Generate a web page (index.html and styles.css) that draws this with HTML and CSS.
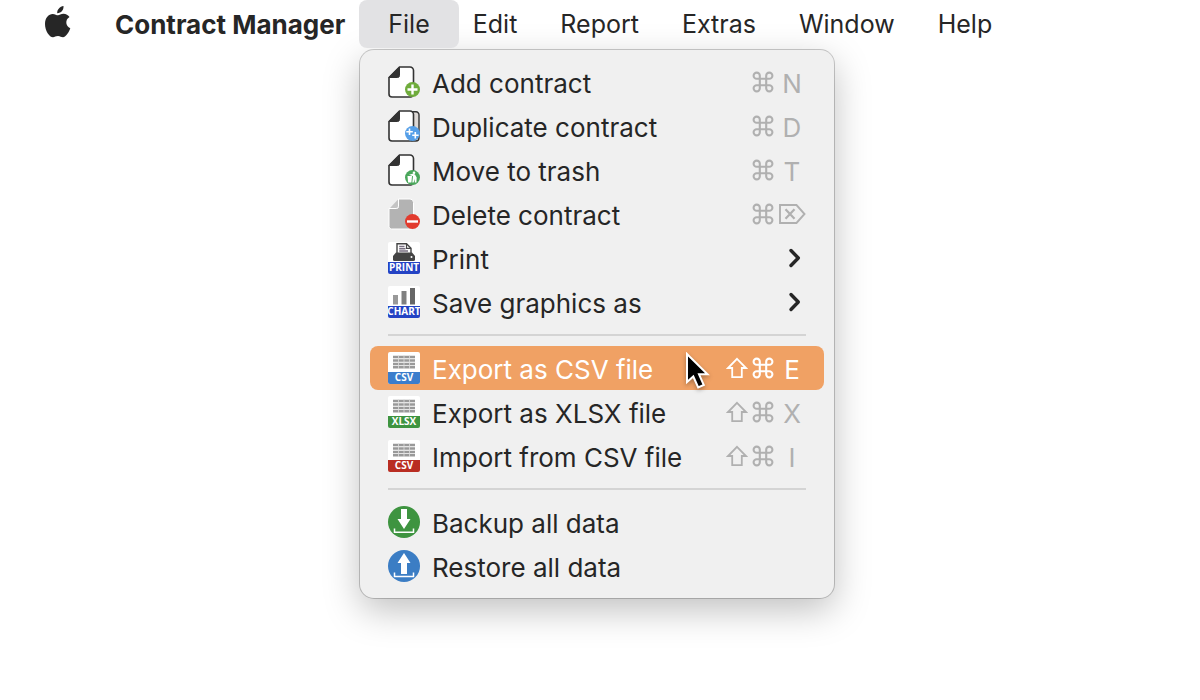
FILE: index.html
```html
<!DOCTYPE html>
<html lang="en">
<head>
    <meta charset="UTF-8">
    <meta name="viewport" content="width=device-width, initial-scale=1.0">
    <title>Contract Manager</title>
    <link rel="stylesheet" href="styles.css">
</head>
<body>
    <!-- Shared symbols -->
    <svg class="symbols" aria-hidden="true">
        <symbol id="cmd" viewBox="0 0 22 22">
            <path d="M7.8 7.8V4.8A3.1 3.1 0 1 0 4.7 7.8H17.3A3.1 3.1 0 1 0 14.2 4.8V17.2A3.1 3.1 0 1 0 17.3 14.2H4.7A3.1 3.1 0 1 0 7.8 17.2Z" fill="none" stroke="currentColor" stroke-width="2.1"/>
        </symbol>
        <symbol id="shift" viewBox="0 0 22 22">
            <path d="M11 1.8L20 11H15.8V20.2H6.2V11H2Z" fill="none" stroke="currentColor" stroke-width="1.8"/>
        </symbol>
        <symbol id="chevron" viewBox="0 0 14 22">
            <path d="M4 3.5L11.3 11L4 18.5" fill="none" stroke="currentColor" stroke-width="3.4" stroke-linecap="round" stroke-linejoin="round"/>
        </symbol>
        <symbol id="page" viewBox="0 0 32 32">
            <path d="M11.5 1H22a3.5 3.5 0 0 1 3.5 3.5V28A3 3 0 0 1 22.5 31H4A3 3 0 0 1 1 28V11.5Z" fill="#fff" stroke="#333" stroke-width="1.6"/>
            <path d="M11.5 1V9.5a2 2 0 0 1-2 2H1Z" fill="#333" stroke="#333" stroke-width="1" stroke-linejoin="round"/>
        </symbol>
        <symbol id="sheet" viewBox="0 0 32 32">
            <rect width="32" height="32" rx="2" fill="#fff"/>
            <path d="M5 5H27M5 8.5H27M5 12H27M5 15.2H27" stroke="#999" stroke-width="2.4"/>
            <path d="M10.5 3V17M16 3V17M21.5 3V17" stroke="#ddd" stroke-width="0.8"/>
        </symbol>
    </svg>

    <nav class="menubar">
        <button class="apple" aria-label="Apple">
            <svg width="28" height="34" viewBox="0 0 28 34">
                <path d="M19.5 1C19.9 4.7 17 8.3 13.2 8.2C12.9 4.6 16 1.4 19.5 1Z"/>
                <path d="M14 10.3C15.3 10.3 17 8.8 19.5 8.8C22 8.8 24.3 10.1 25.5 12C20.8 14.7 21.5 21.3 26.3 23.3C25 27 22 32.2 19 32.3C17 32.3 16.4 31 14 31C11.5 31 10.8 32.2 9 32.3C5.5 32.4 1 25.8 1 19C1 12.6 4.7 8.9 8.7 8.9C11 8.9 12.6 10.3 14 10.3Z"/>
            </svg>
        </button>
        <button class="app-name">Contract Manager</button>
        <button class="open">File</button>
        <button>Edit</button>
        <button>Report</button>
        <button>Extras</button>
        <button>Window</button>
        <button>Help</button>
    </nav>

    <div class="menu">
        <button class="item">
            <svg class="icon" viewBox="0 0 32 32">
                <use href="#page"/>
                <circle cx="24.5" cy="23.5" r="7.5" fill="#6fac3c"/>
                <path d="M24.5 18.5V28.5M19.5 23.5H29.5" stroke="#fff" stroke-width="2.4"/>
            </svg>
            <span class="label">Add contract</span>
            <span class="keys"><svg class="mod" role="img" aria-label="Command"><use href="#cmd"/></svg><span class="key">N</span></span>
        </button>
        <button class="item">
            <svg class="icon" viewBox="0 0 32 32">
                <path d="M24 1.8H28a3 3 0 0 1 3 3V28a3 3 0 0 1-3 3H24Z" fill="#ddd8d5" stroke="#333" stroke-width="1.4"/>
                <use href="#page"/>
                <circle cx="24.5" cy="23.5" r="7.5" fill="#559fe8"/>
                <path d="M21.5 18.5V25M18.3 21.7H24.8M27.3 22V28.5M24.2 25.3H30.6" stroke="#fff" stroke-width="1.6"/>
            </svg>
            <span class="label">Duplicate contract</span>
            <span class="keys"><svg class="mod" role="img" aria-label="Command"><use href="#cmd"/></svg><span class="key">D</span></span>
        </button>
        <button class="item">
            <svg class="icon" viewBox="0 0 32 32">
                <use href="#page"/>
                <circle cx="24.5" cy="23.5" r="7.5" fill="#4aa65b"/>
                <path d="M19.5 22H24L23.4 28.5H20.1Z" fill="#fff"/>
                <circle cx="26" cy="18.7" r="1.3" fill="#fff"/>
                <path d="M21 20.8L24.6 19.8L27 20.5L28.7 23.5L28.4 28.5H26.8V25L25.6 28.5H24.3L25 22.3Z" fill="#fff"/>
            </svg>
            <span class="label">Move to trash</span>
            <span class="keys"><svg class="mod" role="img" aria-label="Command"><use href="#cmd"/></svg><span class="key">T</span></span>
        </button>
        <button class="item">
            <svg class="icon" viewBox="0 0 32 32">
                <path d="M10.5 1H22a3.5 3.5 0 0 1 3.5 3.5V28.5A2.5 2.5 0 0 1 23 31H3.5A2.5 2.5 0 0 1 1 28.5V10.5H8.5a2 2 0 0 0 2-2Z" fill="#b3b3b3" stroke="#fff" stroke-width="1"/>
                <path d="M2 10L10 1.5V8a2 2 0 0 1-2 2Z" fill="#c4c4c4"/>
                <circle cx="24.5" cy="23.5" r="7.5" fill="#e23b2e"/>
                <path d="M19 23.5H30" stroke="#fff" stroke-width="2.4"/>
            </svg>
            <span class="label">Delete contract</span>
            <span class="keys">
                <svg class="mod" role="img" aria-label="Command"><use href="#cmd"/></svg>
                <svg class="delete-key" viewBox="0 0 28 22" role="img" aria-label="Forward delete">
                    <path d="M2 2H18.5L26.5 11L18.5 20H2Z" fill="none" stroke="currentColor" stroke-width="1.9"/>
                    <path d="M7.5 6.2L16.5 15.8M16.5 6.2L7.5 15.8" fill="none" stroke="currentColor" stroke-width="2.2"/>
                </svg>
            </span>
        </button>
        <button class="item">
            <svg class="icon" viewBox="0 0 32 32">
                <rect width="32" height="32" rx="2" fill="#fff"/>
                <path d="M9 12V1.8H18.5L23 6.3V12" fill="#fff" stroke="#444" stroke-width="1.4"/>
                <path d="M18.5 1.8V6.3H23" fill="none" stroke="#444" stroke-width="1.2"/>
                <path d="M11.2 4.5H16.5M11.2 6.8H17.5M11.2 9H20" stroke="#776e80" stroke-width="1.4"/>
                <path d="M8 10.5H24L27 14V17.5a1.5 1.5 0 0 1-1.5 1.5H6.5A1.5 1.5 0 0 1 5 17.5V14Z" fill="#444"/>
                <circle cx="23.5" cy="15" r="1" fill="#fff"/>
                <path d="M0 20H32V30a2 2 0 0 1-2 2H2a2 2 0 0 1-2-2Z" fill="#2443c4"/>
                <text class="tag" x="16" y="29">PRINT</text>
            </svg>
            <span class="label">Print</span>
            <svg class="chevron"><use href="#chevron"/></svg>
        </button>
        <button class="item">
            <svg class="icon" viewBox="0 0 32 32">
                <rect width="32" height="32" rx="2" fill="#fff"/>
                <path d="M5 9H10V18.5H5Z" fill="#999"/>
                <path d="M13.5 5H18.5V18.5H13.5Z" fill="#808080"/>
                <path d="M22 2H27V18.5H22Z" fill="#666"/>
                <path d="M0 20H32V30a2 2 0 0 1-2 2H2a2 2 0 0 1-2-2Z" fill="#2443c4"/>
                <text class="tag" x="16" y="29">CHART</text>
            </svg>
            <span class="label">Save graphics as</span>
            <svg class="chevron"><use href="#chevron"/></svg>
        </button>
        <hr>
        <button class="item selected">
            <svg class="icon" viewBox="0 0 32 32">
                <use href="#sheet"/>
                <path d="M0 20H32V30a2 2 0 0 1-2 2H2a2 2 0 0 1-2-2Z" fill="#3b7dcc"/>
                <text class="tag" x="16" y="29">CSV</text>
            </svg>
            <span class="label">Export as CSV file</span>
            <span class="keys"><svg class="mod" role="img" aria-label="Shift"><use href="#shift"/></svg><svg class="mod" role="img" aria-label="Command"><use href="#cmd"/></svg><span class="key">E</span></span>
            <svg class="pointer" viewBox="0 0 26 40">
                <path d="M2 2V30L8.3 24.5L13.2 35.5L18.8 33L14 22.3H22.5Z" fill="#000" stroke="#fff" stroke-width="2"/>
            </svg>
        </button>
        <button class="item">
            <svg class="icon" viewBox="0 0 32 32">
                <use href="#sheet"/>
                <path d="M0 20H32V30a2 2 0 0 1-2 2H2a2 2 0 0 1-2-2Z" fill="#3e9440"/>
                <text class="tag" x="16" y="29">XLSX</text>
            </svg>
            <span class="label">Export as XLSX file</span>
            <span class="keys"><svg class="mod" role="img" aria-label="Shift"><use href="#shift"/></svg><svg class="mod" role="img" aria-label="Command"><use href="#cmd"/></svg><span class="key">X</span></span>
        </button>
        <button class="item">
            <svg class="icon" viewBox="0 0 32 32">
                <use href="#sheet"/>
                <path d="M0 20H32V30a2 2 0 0 1-2 2H2a2 2 0 0 1-2-2Z" fill="#b92d22"/>
                <text class="tag" x="16" y="29">CSV</text>
            </svg>
            <span class="label">Import from CSV file</span>
            <span class="keys"><svg class="mod" role="img" aria-label="Shift"><use href="#shift"/></svg><svg class="mod" role="img" aria-label="Command"><use href="#cmd"/></svg><span class="key">I</span></span>
        </button>
        <hr>
        <button class="item">
            <svg class="icon" viewBox="0 0 32 32">
                <circle cx="16" cy="16" r="16" fill="#3e9440"/>
                <path d="M13 3H19V13H22.5L16 23L9.5 13H13Z" fill="#fff"/>
                <path d="M6.5 22.5V26.3H25.5V22.5" fill="none" stroke="#fff" stroke-width="1.5"/>
            </svg>
            <span class="label">Backup all data</span>
        </button>
        <button class="item">
            <svg class="icon" viewBox="0 0 32 32">
                <circle cx="16" cy="16" r="16" fill="#3b7dc4"/>
                <path d="M13 24H19V13H22.5L16 3L9.5 13H13Z" fill="#fff"/>
                <path d="M6.5 22.5V26.5H25.5V22.5" fill="none" stroke="#fff" stroke-width="1.5"/>
            </svg>
            <span class="label">Restore all data</span>
        </button>
    </div>
</body>
</html>
```
FILE: styles.css
```css
* {
    box-sizing: border-box;
    margin: 0;
    padding: 0;
}

body {
    min-height: 100vh;
    background-color: #fff;
    color: #262626;
    font-family: Inter, "Liberation Sans", sans-serif;
    font-size: 26px;
}

button {
    border: none;
    background: none;
    color: inherit;
    font: inherit;
    text-align: left;
    white-space: nowrap;
}

.symbols {
    position: absolute;
    width: 0;
    height: 0;
}

.menubar {
    display: flex;
    gap: 43px;
    height: 48px;
    padding-left: 44px;
    font-size: 25px;
}

.apple {
    display: flex;
    align-items: center;
    fill: #262626;
}

.apple svg {
    margin-bottom: 4px;
}

.menubar .app-name {
    font-size: 26px;
    font-weight: 700;
}

.menubar .open {
    margin: 0 -29px;
    padding: 0 29px;
    border-radius: 8px;
    background-color: #e2e2e4;
}

.menu {
    width: 474px;
    margin: 2px 0 0 360px;
    padding: 10px;
    border-radius: 14px;
    background-color: #f0f0f0;
    box-shadow: 0 0 0 1px rgba(0, 0, 0, 0.2), 0 12px 36px rgba(0, 0, 0, 0.25);
}

.item {
    position: relative;
    display: flex;
    align-items: center;
    width: 100%;
    height: 44px;
    padding: 0 18px;
    border-radius: 8px;
}

.icon {
    width: 32px;
    height: 32px;
    margin-right: 12px;
}

.label {
    flex: 1;
    padding-top: 2px;
}

.tag {
    fill: #fff;
    font-family: "Open Sans", sans-serif;
    font-size: 10px;
    font-weight: 700;
    text-anchor: middle;
}

.keys {
    display: flex;
    align-items: center;
    gap: 4px;
    color: #b0b0b0;
}

.mod {
    width: 22px;
    height: 22px;
}

.key {
    width: 28px;
    padding-top: 2px;
    text-align: center;
}

.delete-key {
    width: 28px;
    height: 22px;
}

.chevron {
    width: 14px;
    height: 22px;
    margin-right: 5px;
}

.selected {
    background-color: #f0a164;
    color: #fff;
}

.selected .keys {
    color: #fff;
}

.pointer {
    position: absolute;
    left: 315px;
    top: 6px;
    width: 26px;
    height: 40px;
    filter: drop-shadow(0 2px 2px rgba(0, 0, 0, 0.3));
}

hr {
    height: 2px;
    margin: 10px 18px;
    border: none;
    background-color: #d4d4d4;
}
```
